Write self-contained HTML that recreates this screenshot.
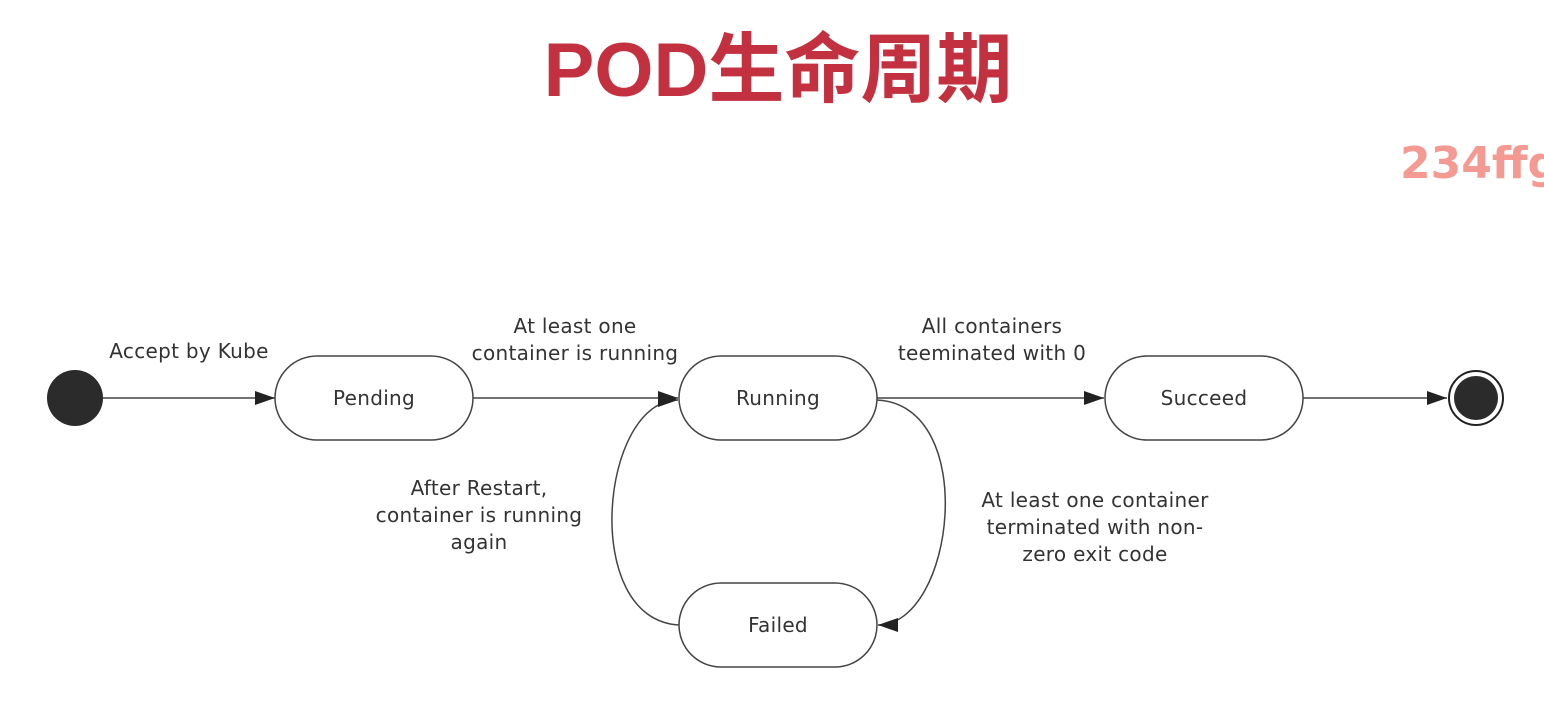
<!DOCTYPE html>
<html><head><meta charset="utf-8"><style>
body{margin:0;width:1544px;height:720px;background:#fff;overflow:hidden;position:relative;font-family:"Liberation Sans","Noto Sans CJK SC",sans-serif}
.t{position:absolute;left:6px;width:1544px;top:21px;text-align:center;font-size:76px;font-weight:bold;color:#c3303f;line-height:100px}
.w{position:absolute;left:1400px;top:138px;font-family:"DejaVu Sans",sans-serif;font-size:44px;font-weight:bold;color:#f59a93;white-space:nowrap}
svg{position:absolute;left:0;top:0}
svg text{font-family:"DejaVu Sans",sans-serif;font-size:20px;letter-spacing:0.3px;fill:#333;text-anchor:middle}
</style></head><body>
<div class="t">POD生命周期</div>
<div class="w">234ffg</div>
<svg width="1544" height="720">
<defs><marker id="a" markerWidth="20" markerHeight="14" refX="20" refY="7" orient="auto" markerUnits="userSpaceOnUse"><path d="M0,0 L20,7 L0,14 Z" fill="#222"/></marker></defs>
<g stroke="#444" stroke-width="1.5" fill="none">
<line x1="103" y1="398" x2="275" y2="398" marker-end="url(#a)"/>
<line x1="473" y1="398" x2="678" y2="398" marker-end="url(#a)"/>
<line x1="877" y1="398" x2="1104" y2="398" marker-end="url(#a)"/>
<line x1="1303" y1="398" x2="1447" y2="398" marker-end="url(#a)"/>
<path d="M877,400 C980,405 955,625 878,625" marker-end="url(#a)"/>
<path d="M679,625 C580,620 600,400 678,400" marker-end="url(#a)"/>
<rect x="275" y="356" width="198" height="84" rx="42" fill="#fff"/>
<rect x="679" y="356" width="198" height="84" rx="42" fill="#fff"/>
<rect x="1105" y="356" width="198" height="84" rx="42" fill="#fff"/>
<rect x="679" y="583" width="198" height="84" rx="42" fill="#fff"/>
</g>
<circle cx="75" cy="398" r="28" fill="#2b2b2b"/>
<circle cx="1476" cy="398" r="27" fill="#fff" stroke="#222" stroke-width="2"/>
<circle cx="1476" cy="398" r="22" fill="#2b2b2b"/>
<text x="374" y="405">Pending</text>
<text x="778" y="405">Running</text>
<text x="1204" y="405">Succeed</text>
<text x="778" y="632">Failed</text>
<text x="189" y="358">Accept by Kube</text>
<text x="575" y="333">At least one</text>
<text x="575" y="360">container is running</text>
<text x="992" y="333">All containers</text>
<text x="992" y="360">teeminated with 0</text>
<text x="479" y="495">After Restart,</text>
<text x="479" y="522">container is running</text>
<text x="479" y="549">again</text>
<text x="1095" y="507">At least one container</text>
<text x="1095" y="534">terminated with non-</text>
<text x="1095" y="561">zero exit code</text>
</svg>
</body></html>
